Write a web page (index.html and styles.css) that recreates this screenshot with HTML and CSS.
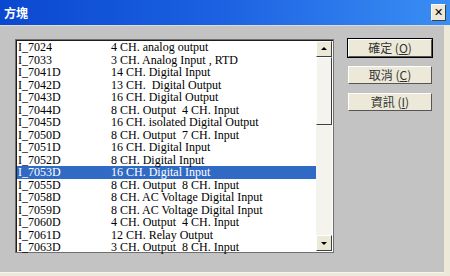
FILE: index.html
```
<!DOCTYPE html>
<html lang="zh-Hant">
<head>
  <meta charset="UTF-8">
  <title>方塊</title>
  <link rel="stylesheet" href="styles.css">
</head>
<body>

  <div class="window">
    <div class="titlebar">
      <span class="title">方塊</span>
      <button class="close-btn">&#x2715;</button>
    </div>

    <div class="content">
      <div class="listbox">
        <ul class="items">
          <li><span class="code">I_7024</span><span class="desc">4 CH. analog output</span></li>
          <li><span class="code">I_7033</span><span class="desc">3 CH. Analog Input , RTD</span></li>
          <li><span class="code">I_7041D</span><span class="desc">14 CH. Digital Input</span></li>
          <li><span class="code">I_7042D</span><span class="desc">13 CH.&nbsp; Digital Output</span></li>
          <li><span class="code">I_7043D</span><span class="desc">16 CH. Digital Output</span></li>
          <li><span class="code">I_7044D</span><span class="desc">8 CH. Output&nbsp; 4 CH. Input</span></li>
          <li><span class="code">I_7045D</span><span class="desc">16 CH. isolated Digital Output</span></li>
          <li><span class="code">I_7050D</span><span class="desc">8 CH. Output&nbsp; 7 CH. Input</span></li>
          <li><span class="code">I_7051D</span><span class="desc">16 CH. Digital Input</span></li>
          <li><span class="code">I_7052D</span><span class="desc">8 CH. Digital Input</span></li>
          <li class="selected"><span class="code">I_7053D</span><span class="desc">16 CH. Digital Input</span></li>
          <li><span class="code">I_7055D</span><span class="desc">8 CH. Output&nbsp; 8 CH. Input</span></li>
          <li><span class="code">I_7058D</span><span class="desc">8 CH. AC Voltage Digital Input</span></li>
          <li><span class="code">I_7059D</span><span class="desc">8 CH. AC Voltage Digital Input</span></li>
          <li><span class="code">I_7060D</span><span class="desc">4 CH. Output&nbsp; 4 CH. Input</span></li>
          <li><span class="code">I_7061D</span><span class="desc">12 CH. Relay Output</span></li>
          <li><span class="code">I_7063D</span><span class="desc">3 CH. Output&nbsp; 8 CH. Input</span></li>
        </ul>
        <div class="scrollbar">
          <div class="arrow up"></div>
          <div class="thumb"></div>
          <div class="track"></div>
          <div class="arrow down"></div>
        </div>
      </div>

      <div class="actions">
        <button class="btn default">確定 (<u>O</u>)</button>
        <button class="btn">取消 (<u>C</u>)</button>
        <button class="btn">資訊 (<u>I</u>)</button>
      </div>
    </div>
  </div>

</body>
</html>
```

FILE: styles.css
```
body {
  margin: 0;
  background: #ece9d8;
  font-family: "Liberation Serif", "Noto Sans CJK TC", serif;
}
.window {
  width: 450px;
  height: 276px;
  display: flex;
  flex-direction: column;
  background: #ece9d8;
}
.titlebar {
  height: 25px;
  display: flex;
  align-items: center;
  justify-content: space-between;
  padding: 0 4px 0 4px;
  background: linear-gradient(to right, #0a48d0, #1c62e2 50%, #3a8ef4);
  box-sizing: border-box;
}
.title {
  color: #fff;
  font-family: "Noto Sans CJK TC", sans-serif;
  font-weight: bold;
  font-size: 12px;
}
.close-btn {
  width: 15px;
  height: 17px;
  padding: 0;
  border: 1px solid #fff;
  border-right-color: #404040;
  border-bottom-color: #404040;
  background: #ece9d8;
  color: #000;
  font-size: 11px;
  font-weight: bold;
  line-height: 14px;
  font-family: "DejaVu Sans", sans-serif;
}
.content {
  flex: 1;
  display: flex;
  align-items: flex-start;
  background: #c3c3c3;
  padding: 13px 0 0 15px;
  border-top: 1px solid #dcdcdc;
  border-bottom: 1px solid #f4f4f4;
  margin: 0 6px 3px 0;
}
.listbox {
  width: 319px;
  height: 214px;
  display: flex;
  background: #fff;
  border: 1px solid #6f6f6f;
  box-shadow: inset 1px 1px #1e1e1e;
  box-sizing: border-box;
  padding: 1px 1px 0 1px;
}
.items {
  flex: 1;
  list-style: none;
  margin: 0;
  padding: 0;
  font-size: 12px;
  line-height: 12.5px;
  color: #000;
}
.items li {
  display: flex;
  height: 12.5px;
  white-space: nowrap;
  padding-left: 1px;
}
.items .code {
  width: 93px;
}
.items li.selected {
  background: #316ac5;
  color: #fff;
}
.scrollbar {
  width: 16px;
  display: flex;
  flex-direction: column;
  background: #f4f3ee;
  margin-bottom: 1px;
}
.arrow {
  height: 16px;
  background: #ece9d8;
  border: 1px solid #fff;
  border-right-color: #404040;
  border-bottom-color: #404040;
  box-sizing: border-box;
  position: relative;
}
.arrow::after {
  content: "";
  position: absolute;
  left: 4px;
  width: 0;
  height: 0;
  border-left: 3px solid transparent;
  border-right: 3px solid transparent;
}
.arrow.up::after {
  top: 5px;
  border-bottom: 3px solid #000;
}
.arrow.down::after {
  top: 6px;
  border-top: 3px solid #000;
}
.thumb {
  height: 68px;
  background: #f4f3ee;
  border: 1px solid #fff;
  border-right-color: #404040;
  border-bottom-color: #404040;
  box-sizing: border-box;
}
.track {
  flex: 1;
}
.actions {
  display: flex;
  flex-direction: column;
  gap: 9px;
  margin-left: 14px;
}
.btn {
  width: 84px;
  height: 18px;
  padding: 0;
  background: #ece9d8;
  border: 1px solid #fff;
  border-right-color: #555;
  border-bottom-color: #555;
  font-family: "Noto Sans CJK TC", sans-serif;
  font-size: 12px;
  line-height: 14px;
  color: #333;
}
.btn.default {
  outline: 1px solid #000;
}
```
